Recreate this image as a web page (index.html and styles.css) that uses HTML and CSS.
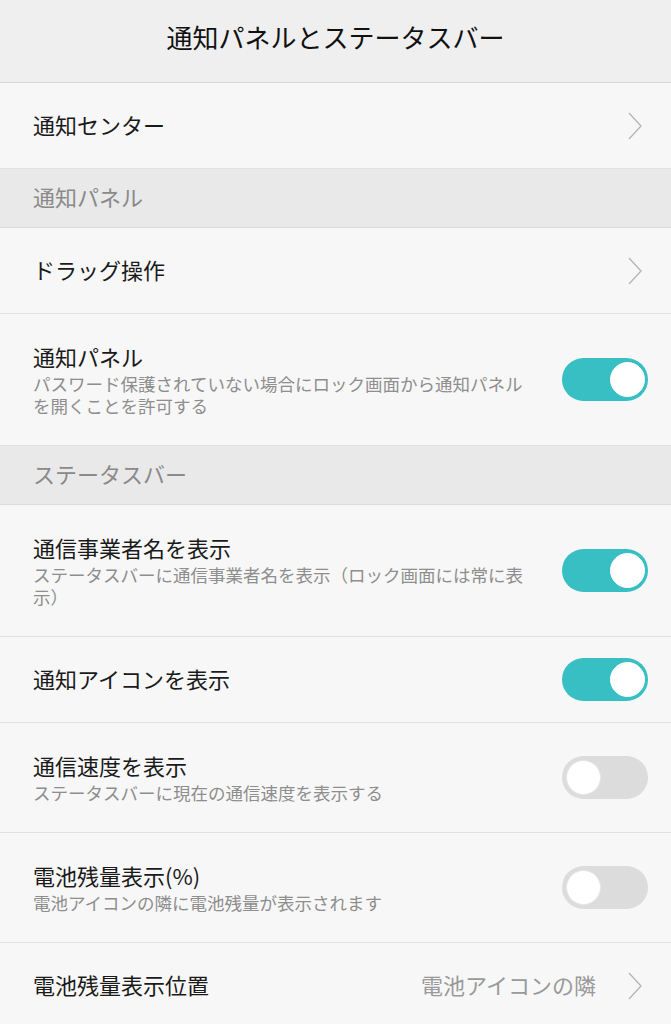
FILE: index.html
```html
<!DOCTYPE html>
<html lang="ja">
<head>
<meta charset="utf-8">
<link rel="stylesheet" href="styles.css">
</head>
<body>
<div class="page">
  <header class="topbar"><h1 class="title">通知パネルとステータスバー</h1></header>

  <div class="row link">
    <div class="text"><div class="label">通知センター</div></div>
    <svg class="chev" viewBox="0 0 14 28" width="14" height="28"><path d="M1 1 L13 14 L1 27" fill="none" stroke="#b5b5b5" stroke-width="1.3"/></svg>
  </div>

  <div class="section">通知パネル</div>

  <div class="row link">
    <div class="text"><div class="label">ドラッグ操作</div></div>
    <svg class="chev" viewBox="0 0 14 28" width="14" height="28"><path d="M1 1 L13 14 L1 27" fill="none" stroke="#b5b5b5" stroke-width="1.3"/></svg>
  </div>

  <div class="row sub">
    <div class="text">
      <div class="label">通知パネル</div>
      <div class="desc">パスワード保護されていない場合にロック画面から通知パネルを開くことを許可する</div>
    </div>
    <div class="toggle on"><span class="knob"></span></div>
  </div>

  <div class="section">ステータスバー</div>

  <div class="row sub">
    <div class="text">
      <div class="label">通信事業者名を表示</div>
      <div class="desc">ステータスバーに通信事業者名を表示（ロック画面には常に表示）</div>
    </div>
    <div class="toggle on"><span class="knob"></span></div>
  </div>

  <div class="row">
    <div class="text"><div class="label">通知アイコンを表示</div></div>
    <div class="toggle on"><span class="knob"></span></div>
  </div>

  <div class="row sub">
    <div class="text">
      <div class="label">通信速度を表示</div>
      <div class="desc">ステータスバーに現在の通信速度を表示する</div>
    </div>
    <div class="toggle"><span class="knob"></span></div>
  </div>

  <div class="row sub">
    <div class="text">
      <div class="label">電池残量表示(%)</div>
      <div class="desc">電池アイコンの隣に電池残量が表示されます</div>
    </div>
    <div class="toggle"><span class="knob"></span></div>
  </div>

  <div class="row link">
    <div class="text"><div class="label">電池残量表示位置</div></div>
    <div class="value">電池アイコンの隣</div>
    <svg class="chev" viewBox="0 0 14 28" width="14" height="28"><path d="M1 1 L13 14 L1 27" fill="none" stroke="#b5b5b5" stroke-width="1.3"/></svg>
  </div>
</div>
</body>
</html>
```

FILE: styles.css
```css
html, body {
  margin: 0;
  padding: 0;
  background: #f7f7f7;
}
body {
  font-family: "Noto Sans CJK JP", "Noto Sans", sans-serif;
  color: #1c1c1c;
}
.page {
  width: 671px;
  overflow: hidden;
}
.topbar {
  height: 82px;
  background: #efefef;
  border-bottom: 1px solid #d9d9d9;
  display: flex;
  align-items: center;
  justify-content: center;
}
.title {
  margin: 0;
  font-size: 26px;
  font-weight: 400;
  line-height: 34px;
  color: #111;
  padding-bottom: 8px;
}
.row {
  display: flex;
  align-items: center;
  min-height: 86px;
  box-sizing: border-box;
  padding: 0 23px 3px 33px;
  border-bottom: 1px solid #e2e2e2;
  background: #f7f7f7;
}
.row.link {
  padding-right: 29px;
}
.row.sub {
  padding-top: 27px;
  padding-bottom: 28px;
}
.text {
  flex: 1;
  min-width: 0;
}
.label {
  font-size: 22px;
  line-height: 30px;
  color: #1a1a1a;
}
.desc {
  margin-top: 2px;
  font-size: 17.5px;
  line-height: 22px;
  color: #8e8e8e;
  max-width: 500px;
}
.value {
  font-size: 22px;
  line-height: 30px;
  color: #9a9a9a;
  margin-right: 32px;
}
.chev {
  display: block;
  flex: none;
  margin-top: 3px;
}
.section {
  height: 59px;
  box-sizing: border-box;
  background: #e9e9e9;
  border-bottom: 1px solid #dcdcdc;
  padding-left: 33px;
  font-size: 22px;
  line-height: 54px;
  color: #8a8a8a;
}
.toggle {
  flex: none;
  width: 86px;
  height: 43px;
  border-radius: 22px;
  background: #dcdcdc;
  box-sizing: border-box;
  position: relative;
  margin-left: 30px;
}
.row:not(.sub) .toggle {
  margin-top: 3px;
}
.toggle.on {
  background: #38bfc3;
}
.knob {
  position: absolute;
  top: 4px;
  left: 4px;
  width: 35px;
  height: 35px;
  border-radius: 50%;
  background: #ffffff;
  box-sizing: border-box;
  border: 1px solid #e6e6e6;
}
.toggle.on .knob {
  left: auto;
  right: 3px;
  border-color: #ffffff;
}
```
